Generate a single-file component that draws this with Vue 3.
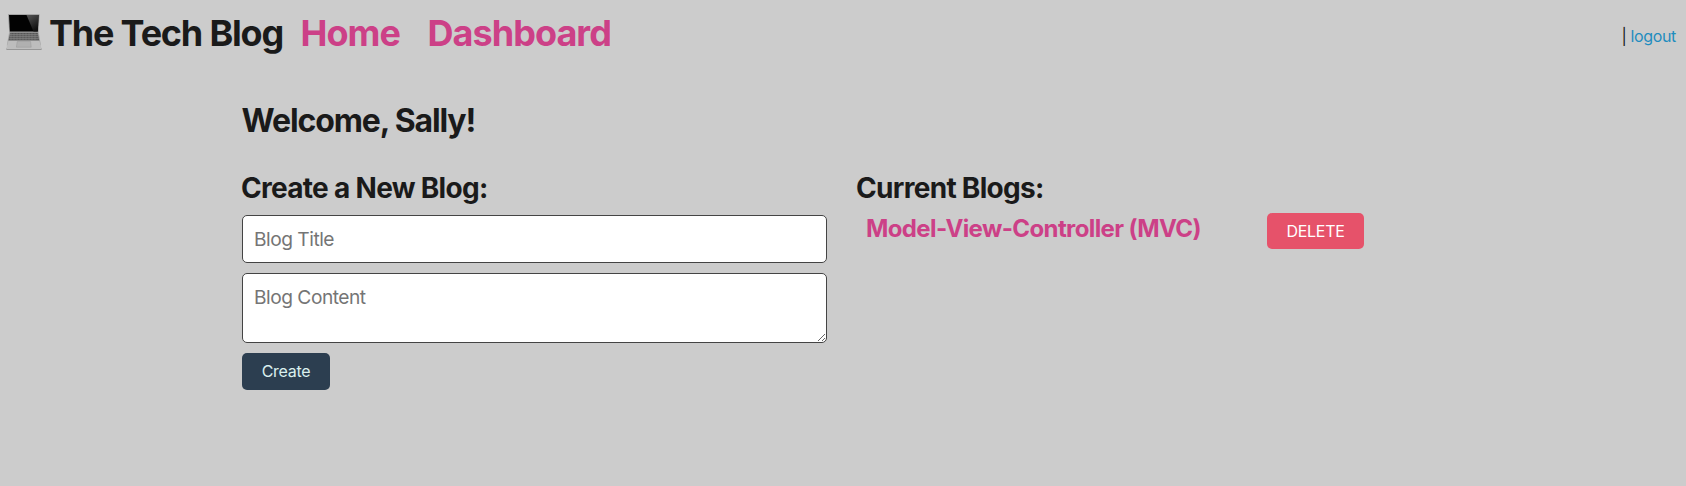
<script setup>
import { ref } from 'vue'

const title = ref('')
const content = ref('')
const posts = [{ id: 1, title: 'Model-View-Controller (MVC)' }]
</script>

<template>
  <div class="page">
    <header class="header">
      <svg class="laptop" viewBox="0 0 36 37" aria-hidden="true">
        <defs>
          <linearGradient id="shine" x1="0" y1="0" x2="0.5" y2="1">
            <stop offset="0" stop-color="#555" />
            <stop offset="1" stop-color="#111" />
          </linearGradient>
        </defs>
        <path d="M2 .3H33.5L32.6 18H3.2Z" fill="#999" />
        <path d="M3 1H32.6L31.8 17.5H3.9Z" fill="#020202" />
        <path d="M20.5 1H32.6L31.8 17.5H27.5Z" fill="url(#shine)" />
        <path d="M3.2 18H32.6L35 31.5H.8Z" fill="#a5a5a5" />
        <path d="M4.2 18.7H31.7L33.2 26.6H2.5Z" fill="#555" />
        <path d="M4 20.7H32M3.6 22.7H32.4M3.2 24.7H32.8" stroke="#999" stroke-width=".6" />
        <path d="M5 19V26M8 19V26M11 19V26M14 19V26M17 19V26M20 19V26M23 19V26M26 19V26M29 19V26" stroke="#888" stroke-width=".5" />
        <path d="M2.4 26.8H33.3L35.7 34.8H.2Z" fill="#bdbdbd" />
        <path d="M11.2 27.5H24.6L25.2 33.2H10.4Z" fill="#b0b0b0" stroke="#999" stroke-width=".5" />
        <path d="M.2 34.5H35.8V35.2Q35.7 36 34.5 36H1.5Q.3 36 .2 35.2Z" fill="#8f8f8f" />
        <path d="M.7 34.7H35.3" stroke="#d5d5d5" stroke-width=".6" />
      </svg>
      <h1 class="brand">The Tech Blog</h1>
      <nav class="nav">
        <a class="home">Home</a>
        <a class="dashboard">Dashboard</a>
      </nav>
      <div class="session">| <a>logout</a></div>
    </header>

    <main class="main">
      <h2 class="welcome">Welcome, Sally!</h2>
      <div class="columns">
        <section>
          <h3>Create a New Blog:</h3>
          <form class="form" @submit.prevent>
            <input v-model="title" class="field" type="text" placeholder="Blog Title" />
            <textarea v-model="content" class="field area" placeholder="Blog Content"></textarea>
            <button class="btn create" type="submit">Create</button>
          </form>
        </section>
        <section>
          <h3>Current Blogs:</h3>
          <div v-for="post in posts" :key="post.id" class="post">
            <a class="post-title">{{ post.title }}</a>
            <button class="btn delete" type="button">DELETE</button>
          </div>
        </section>
      </div>
    </main>
  </div>
</template>

<style>
body {
  margin: 0;
  background: #ccc;
}
</style>

<style scoped>
.page {
  box-sizing: border-box;
  min-height: 486px;
  background: #ccc;
  color: #1a1a1a;
  font-family: Inter, "Liberation Sans", sans-serif;
  font-size: 16px;
}
h1, h2, h3 {
  margin: 0;
  font-weight: 700;
}
.header {
  display: flex;
  height: 66px;
  padding: 0 10px 0 6px;
}
.laptop {
  width: 36px;
  height: 37px;
  margin-top: 14px;
}
.brand,
.nav {
  font-size: 36px;
  line-height: 44px;
  padding-top: 11px;
  white-space: nowrap;
}
.brand {
  margin-left: 7px;
  width: 244px;
  letter-spacing: -1.2px;
}
.nav {
  display: flex;
  font-weight: 700;
  color: #cc4087;
  letter-spacing: -0.95px;
}
.home {
  margin-left: 7.5px;
  width: 127px;
}
.session {
  margin-left: auto;
  padding-top: 26px;
  line-height: 20px;
  letter-spacing: -0.35px;
}
.session a {
  color: #1f8dbf;
}
.main {
  width: 1202px;
  margin: 0 auto;
}
.welcome {
  padding-top: 35px;
  margin-left: -0.5px;
  font-size: 32px;
  line-height: 40px;
  letter-spacing: -1.13px;
}
.columns {
  display: grid;
  grid-template-columns: 585px 507px;
  column-gap: 30px;
  padding-top: 30px;
}
h3 {
  margin-left: -1px;
  font-size: 28px;
  line-height: 34px;
  letter-spacing: -0.7px;
  white-space: nowrap;
}
.form {
  display: flex;
  flex-direction: column;
  align-items: flex-start;
  gap: 10px;
  padding-top: 10px;
}
.field {
  box-sizing: border-box;
  width: 585px;
  height: 48px;
  margin: 0;
  padding: 10px 11px;
  border: 1px solid #444;
  border-radius: 5px;
  background: #fff;
  font: 19.2px/26px Inter, "Liberation Sans", sans-serif;
  letter-spacing: -0.5px;
  outline: none;
}
.field::placeholder {
  color: #757575;
}
.area {
  height: 70px;
}
.btn {
  border: 0;
  border-radius: 5px;
  padding: 0;
  font: 16px/20px Inter, "Liberation Sans", sans-serif;
  letter-spacing: -0.3px;
}
.create {
  width: 88px;
  height: 37px;
  padding-bottom: 1px;
  background: #2c3e50;
  color: #daf0ee;
}
.post {
  display: flex;
  justify-content: space-between;
  padding: 8px 0 0 9px;
}
.post-title {
  color: #cc4087;
  font-size: 24px;
  font-weight: 700;
  line-height: 32px;
  letter-spacing: -0.62px;
}
.delete {
  width: 97px;
  height: 36px;
  background: #e6526a;
  color: #fff;
}
</style>
